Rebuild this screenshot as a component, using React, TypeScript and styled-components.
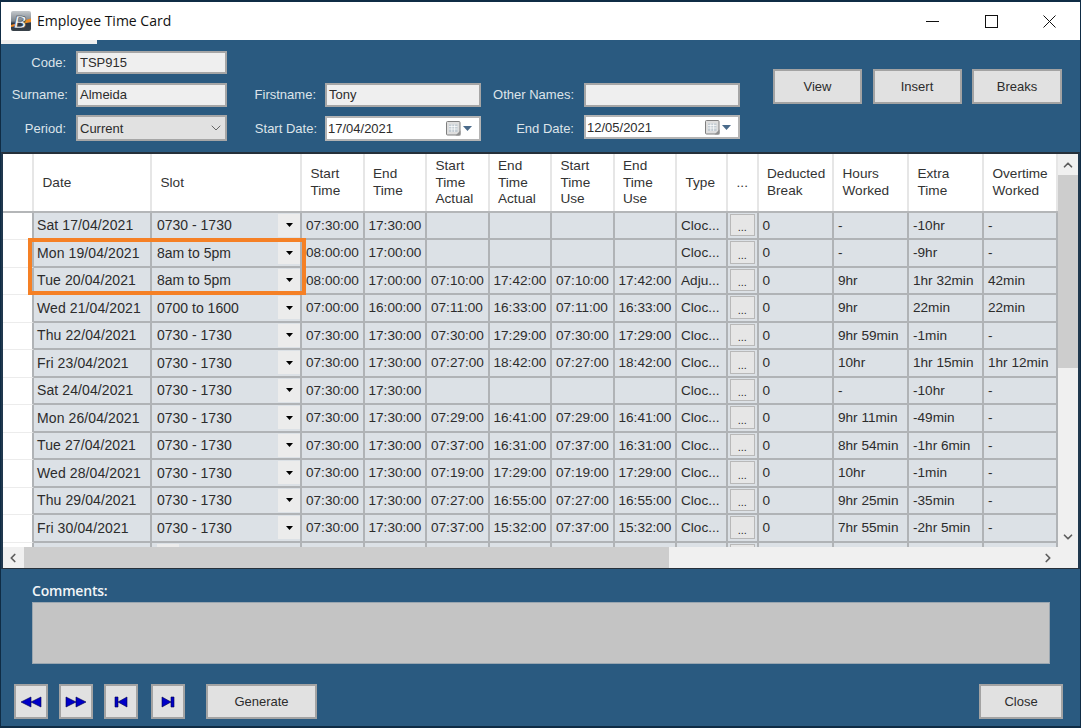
import styled, { createGlobalStyle } from "styled-components";
import { ChevronDown, ChevronLeft, ChevronRight, ChevronUp } from "lucide-react";

const GlobalStyle = createGlobalStyle`
  html, body {
    margin: 0;
    padding: 0;
    background: #1c3a55;
  }
  * {
    box-sizing: border-box;
  }
`;

const COLUMNS = "31px 118px 150px 62.5px 62.5px 62.5px 62.5px 62.5px 62.5px 51px 30.5px 75.5px 75px 75px 74px";

const Window = styled.div`
  position: relative;
  width: 1081px;
  height: 728px;
  padding: 2px 1px 3px 1px;
  display: flex;
  flex-direction: column;
  overflow: hidden;
  background: #0f2c45;
  font-family: "Liberation Sans", Arial, sans-serif;
  font-size: 14px;
  color: #2c2c2c;
`;

const TitleBar = styled.div`
  height: 38px;
  flex: none;
  display: flex;
  align-items: center;
  padding-left: 10px;
  background: #fff;
`;

const TitleText = styled.span`
  margin: -2px 0 0 6px;
  font-family: "Open Sans", sans-serif;
  font-size: 14px;
  color: #111;
`;

const WindowControls = styled.div`
  margin-left: auto;
  display: flex;
  padding-right: 1px;
`;

const WindowControl = styled.div`
  width: 58.5px;
  height: 38px;
  display: flex;
  align-items: center;
  justify-content: center;
`;

const Content = styled.div`
  flex: 1;
  display: flex;
  flex-direction: column;
  background: #2a5a80;
`;

const TabSliver = styled.div`
  width: 96px;
  height: 4px;
  margin-bottom: -4px;
  background: #efefef;
`;

const FormBar = styled.div`
  height: 112px;
  flex: none;
  display: flex;
  align-items: flex-start;
`;

const FormGrid = styled.div`
  display: grid;
  grid-template-columns: 75px 151px 98px 156px 103px 156px;
  grid-template-rows: 23px 24px 26px;
  row-gap: 8.5px;
  padding-top: 11px;
`;

const FieldLabel = styled.label<{ $right?: number }>`
  display: flex;
  align-items: center;
  justify-content: flex-end;
  padding-right: ${(p) => p.$right ?? 8}px;
  font-size: 13px;
  color: #dde4ea;
`;

const TextField = styled.div`
  display: flex;
  align-items: center;
  padding-left: 2px;
  font-size: 13px;
  background: #efefef;
  border: 2px solid #a6a6a6;
`;

const SelectField = styled(TextField)`
  justify-content: space-between;
  padding-right: 1px;
  background: #e1e1e1;
`;

const DateField = styled(TextField)<{ $compact?: boolean }>`
  justify-content: space-between;
  padding-left: 1px;
  padding-right: 7px;
  background: #fff;
  border-color: #b4b4b4;
  margin-bottom: ${(p) => (p.$compact ? "2px" : "0")};
  margin-top: ${(p) => (p.$compact ? "0" : "1px")};
`;

const DateIcons = styled.span`
  display: flex;
  align-items: center;
  gap: 2px;
`;

const ActionButtons = styled.div`
  display: flex;
  gap: 10.5px;
  margin: 29px 0 0 33px;
`;

const PushButton = styled.button<{ $width: number }>`
  width: ${(p) => p.$width}px;
  height: 35px;
  padding: 0;
  font-family: inherit;
  font-size: 13px;
  color: #2c2c2c;
  background: #e1e1e1;
  border: 2px solid #a3a3a3;
`;

const GridPanel = styled.div`
  position: relative;
  height: 417px;
  flex: none;
  display: grid;
  grid-template-columns: 1055px 20px;
  grid-template-rows: 393px 21px;
  background: #f0f0f0;
  border-top: 2px solid #26303a;
  border-left: 2px solid #20384e;
  border-right: 2px solid #20384e;
  border-bottom: 1px solid #26303a;
`;

const GridClip = styled.div`
  overflow: hidden;
  background: #fff;
  font-size: 13.6px;
`;

const HeaderRow = styled.div`
  display: grid;
  grid-template-columns: ${COLUMNS};
  height: 58.5px;
  background: #fff;
  border-bottom: 2px solid #b4b6b8;
`;

const HeaderCell = styled.div<{ $center?: boolean }>`
  display: flex;
  align-items: center;
  justify-content: ${(p) => (p.$center ? "center" : "flex-start")};
  padding-top: 1px;
  padding-left: ${(p) => (p.$center ? "0" : "8.5px")};
  line-height: 16.5px;
  white-space: pre-line;
  color: #333;
  border-right: 2px solid #e6e6e6;
`;

const BodyRow = styled.div`
  display: grid;
  grid-template-columns: ${COLUMNS};
  height: 27.5px;
`;

const RowHeader = styled.div`
  background: #fff;
  border-right: 2px solid #b0b3b6;
  border-bottom: 1px solid #ececec;
`;

const Cell = styled.div`
  display: flex;
  align-items: center;
  justify-content: space-between;
  padding-left: 4px;
  white-space: nowrap;
  overflow: hidden;
  background: #dce1e6;
  border-right: 2px solid #b0b3b6;
  border-bottom: 2px solid #b0b3b6;
`;

const DateCell = styled(Cell)`
  padding-left: 3px;
  font-size: 14px;
  letter-spacing: 0.1px;
`;

const ComboCell = styled(Cell)`
  padding-left: 5px;
  padding-right: 0;
  font-size: 14px;
`;

const ComboButton = styled.span`
  width: 22px;
  height: 23px;
  display: flex;
  align-items: center;
  justify-content: center;
  background: #ececec;
`;

const ButtonCell = styled(Cell)`
  padding: 1px 2px 2px 2px;
`;

const EllipsisButton = styled.span`
  width: 100%;
  height: 100%;
  display: flex;
  align-items: flex-end;
  justify-content: center;
  padding-bottom: 2px;
  font-size: 11px;
  background: #e6e6e6;
  border: 1px solid #b8b8b8;
`;

const VerticalBar = styled.div`
  display: flex;
  flex-direction: column;
  background: #f0f0f0;
`;

const HorizontalBar = styled.div`
  display: flex;
  background: #f0f0f0;
`;

const ArrowBox = styled.div<{ $end?: boolean }>`
  width: 20px;
  height: 21px;
  flex: none;
  display: flex;
  align-items: center;
  justify-content: center;
  margin-top: ${(p) => (p.$end ? "auto" : "0")};
  margin-left: ${(p) => (p.$end ? "auto" : "0")};
  color: #5e5e5e;
`;

const VerticalThumb = styled.div`
  width: 100%;
  height: 193px;
  background: #cdcdcd;
`;

const HorizontalThumb = styled.div`
  width: 645px;
  height: 100%;
  margin-left: 1px;
  background: #cdcdcd;
`;

const Highlight = styled.div`
  position: absolute;
  left: 25px;
  top: 84px;
  width: 278px;
  height: 57px;
  border: 4px solid #f58025;
  pointer-events: none;
`;

const LowerPanel = styled.div`
  flex: 1;
  display: flex;
  flex-direction: column;
  padding: 13px 17px 7px 13px;
`;

const CommentsLabel = styled.div`
  margin-left: 18px;
  height: 20px;
  font-family: "Open Sans", sans-serif;
  font-size: 14px;
  font-weight: 600;
  letter-spacing: -0.2px;
  line-height: 17px;
  color: #f2f5f7;
`;

const CommentsBox = styled.div`
  width: 1018px;
  height: 62px;
  margin-left: 18px;
  background: #c4c4c4;
  border: 1px solid #9aa6b0;
`;

const Footer = styled.div`
  display: flex;
  align-items: center;
  justify-content: space-between;
  margin-top: 20px;
`;

const NavGroup = styled.div`
  display: flex;
  gap: 11px;
`;

const NavButton = styled(PushButton)`
  display: flex;
  align-items: center;
  justify-content: center;
  &:nth-child(4) {
    margin-left: 2px;
  }
`;

const GenerateButton = styled(PushButton)`
  margin-left: 10px;
`;

const Logo = () => (
  <svg width="20" height="20" viewBox="0 0 20 20">
    <defs>
      <linearGradient id="logoBg" x1="0" y1="0" x2="0" y2="1">
        <stop offset="0" stopColor="#c4c8cc" />
        <stop offset="0.5" stopColor="#7d868e" />
        <stop offset="0.62" stopColor="#2e3740" />
        <stop offset="1" stopColor="#39424a" />
      </linearGradient>
    </defs>
    <rect width="20" height="20" rx="2" fill="url(#logoBg)" />
    <path d="M13 9.500 L20 7.500 V11 L13 12.500 Z" fill="#ee8a22" />
    <path d="M0 14 L5 12.500 V15 L0 16 Z" fill="#ee8a22" />
    <text x="3" y="16.500" fontFamily="Liberation Sans" fontStyle="italic" fontWeight="700" fontSize="17" fill="#f4f6f8" stroke="#20303e" strokeWidth="0.5">B</text>
  </svg>
);

const CalendarIcon = () => (
  <svg width="15" height="15" viewBox="0 0 15 15">
    <rect x="0.5" y="0.5" width="13.500" height="13.500" rx="1" fill="#dedede" stroke="#7f7f7f" />
    <path d="M3 3.500h8.500v7.500H3z" fill="#c3ccd3" />
    <path d="M3 5.500h8.500M3 8h8.500M5.800 3.500v7.500M8.600 3.500v7.500" stroke="#fff" strokeWidth="0.7" />
    <path d="M9.500 14.500 L14.500 9.500 V14.500 Z" fill="#8f8f8f" />
  </svg>
);

const DownTriangle = ({ color = "#000", width = 7 }: { color?: string; width?: number }) => (
  <svg width={width} height={Math.ceil(width / 2)} viewBox="0 0 8 4" preserveAspectRatio="none">
    <path d="M0 0h8L4 4z" fill={color} />
  </svg>
);

const NavIcon = ({ d }: { d: string }) => (
  <svg width="22" height="14" viewBox="0 0 22 14">
    <path d={d} fill="#0000c8" stroke="#00004a" strokeWidth="0.6" />
  </svg>
);

const headers = [
  "Date", "Slot", "Start\nTime", "End\nTime", "Start\nTime\nActual", "End\nTime\nActual",
  "Start\nTime\nUse", "End\nTime\nUse", "Type", "...", "Deducted\nBreak", "Hours\nWorked",
  "Extra\nTime", "Overtime\nWorked",
];

type Row = [string, string, string, string, string, string, string, string, string, string, string, string];

const A = "0730 - 1730";
const rows: Row[] = [
  ["Sat 17/04/2021", A, "07:30:00", "17:30:00", "", "", "", "", "Cloc...", "-", "-10hr", "-"],
  ["Mon 19/04/2021", "8am to 5pm", "08:00:00", "17:00:00", "", "", "", "", "Cloc...", "-", "-9hr", "-"],
  ["Tue 20/04/2021", "8am to 5pm", "08:00:00", "17:00:00", "07:10:00", "17:42:00", "07:10:00", "17:42:00", "Adju...", "9hr", "1hr 32min", "42min"],
  ["Wed 21/04/2021", "0700 to 1600", "07:00:00", "16:00:00", "07:11:00", "16:33:00", "07:11:00", "16:33:00", "Cloc...", "9hr", "22min", "22min"],
  ["Thu 22/04/2021", A, "07:30:00", "17:30:00", "07:30:00", "17:29:00", "07:30:00", "17:29:00", "Cloc...", "9hr 59min", "-1min", "-"],
  ["Fri 23/04/2021", A, "07:30:00", "17:30:00", "07:27:00", "18:42:00", "07:27:00", "18:42:00", "Cloc...", "10hr", "1hr 15min", "1hr 12min"],
  ["Sat 24/04/2021", A, "07:30:00", "17:30:00", "", "", "", "", "Cloc...", "-", "-10hr", "-"],
  ["Mon 26/04/2021", A, "07:30:00", "17:30:00", "07:29:00", "16:41:00", "07:29:00", "16:41:00", "Cloc...", "9hr 11min", "-49min", "-"],
  ["Tue 27/04/2021", A, "07:30:00", "17:30:00", "07:37:00", "16:31:00", "07:37:00", "16:31:00", "Cloc...", "8hr 54min", "-1hr 6min", "-"],
  ["Wed 28/04/2021", A, "07:30:00", "17:30:00", "07:19:00", "17:29:00", "07:19:00", "17:29:00", "Cloc...", "10hr", "-1min", "-"],
  ["Thu 29/04/2021", A, "07:30:00", "17:30:00", "07:27:00", "16:55:00", "07:27:00", "16:55:00", "Cloc...", "9hr 25min", "-35min", "-"],
  ["Fri 30/04/2021", A, "07:30:00", "17:30:00", "07:37:00", "15:32:00", "07:37:00", "15:32:00", "Cloc...", "7hr 55min", "-2hr 5min", "-"],
  ["", "", "", "", "", "", "", "", "", "", "", ""],
];

const App = () => {
  return (
    <Window>
      <GlobalStyle />
      <TitleBar>
        <Logo />
        <TitleText>Employee Time Card</TitleText>
        <WindowControls>
          <WindowControl>
            <svg width="13" height="13" viewBox="0 0 13 13">
              <path d="M0 6.500h13" stroke="#111" />
            </svg>
          </WindowControl>
          <WindowControl>
            <svg width="13" height="13" viewBox="0 0 13 13">
              <rect x="0.500" y="0.500" width="12" height="12" fill="none" stroke="#111" />
            </svg>
          </WindowControl>
          <WindowControl>
            <svg width="13" height="13" viewBox="0 0 13 13">
              <path d="M0.500 0.500l12 12M12.500 0.500l-12 12" stroke="#111" />
            </svg>
          </WindowControl>
        </WindowControls>
      </TitleBar>

      <Content>
        <TabSliver />
        <FormBar>
          <FormGrid>
            <FieldLabel $right={10}>Code:</FieldLabel>
            <TextField>TSP915</TextField>
            <span />
            <span />
            <span />
            <span />

            <FieldLabel>Surname:</FieldLabel>
            <TextField>Almeida</TextField>
            <FieldLabel $right={9}>Firstname:</FieldLabel>
            <TextField>Tony</TextField>
            <FieldLabel $right={10}>Other Names:</FieldLabel>
            <TextField />

            <FieldLabel $right={10}>Period:</FieldLabel>
            <SelectField>
              Current
              <ChevronDown size={16} color="#666" strokeWidth={1.5} />
            </SelectField>
            <FieldLabel>Start Date:</FieldLabel>
            <DateField>
              17/04/2021
              <DateIcons>
                <CalendarIcon />
                <DownTriangle color="#4a6a8a" width={9} />
              </DateIcons>
            </DateField>
            <FieldLabel $right={10}>End Date:</FieldLabel>
            <DateField $compact>
              12/05/2021
              <DateIcons>
                <CalendarIcon />
                <DownTriangle color="#4a6a8a" width={9} />
              </DateIcons>
            </DateField>
          </FormGrid>
          <ActionButtons>
            <PushButton $width={89}>View</PushButton>
            <PushButton $width={89}>Insert</PushButton>
            <PushButton $width={90}>Breaks</PushButton>
          </ActionButtons>
        </FormBar>

        <GridPanel>
          <GridClip>
            <HeaderRow>
              <HeaderCell />
              {headers.map((h, i) => (
                <HeaderCell key={i} $center={h === "..."}>
                  {h}
                </HeaderCell>
              ))}
            </HeaderRow>
            {rows.map((r, i) => (
              <BodyRow key={i}>
                <RowHeader />
                <DateCell>{r[0]}</DateCell>
                <ComboCell>
                  {r[1]}
                  <ComboButton>
                    <DownTriangle />
                  </ComboButton>
                </ComboCell>
                <Cell>{r[2]}</Cell>
                <Cell>{r[3]}</Cell>
                <Cell>{r[4]}</Cell>
                <Cell>{r[5]}</Cell>
                <Cell>{r[6]}</Cell>
                <Cell>{r[7]}</Cell>
                <Cell>{r[8]}</Cell>
                <ButtonCell>
                  <EllipsisButton>{r[0] ? "..." : ""}</EllipsisButton>
                </ButtonCell>
                <Cell>{r[0] ? "0" : ""}</Cell>
                <Cell>{r[9]}</Cell>
                <Cell>{r[10]}</Cell>
                <Cell>{r[11]}</Cell>
              </BodyRow>
            ))}
          </GridClip>
          <VerticalBar>
            <ArrowBox>
              <ChevronUp size={14} strokeWidth={3} />
            </ArrowBox>
            <VerticalThumb />
            <ArrowBox $end>
              <ChevronDown size={14} strokeWidth={3} />
            </ArrowBox>
          </VerticalBar>
          <HorizontalBar>
            <ArrowBox>
              <ChevronLeft size={14} strokeWidth={3} />
            </ArrowBox>
            <HorizontalThumb />
            <ArrowBox $end>
              <ChevronRight size={14} strokeWidth={3} />
            </ArrowBox>
          </HorizontalBar>
          <Highlight />
        </GridPanel>

        <LowerPanel>
          <CommentsLabel>Comments:</CommentsLabel>
          <CommentsBox />
          <Footer>
            <NavGroup>
              <NavButton $width={34}>
                <NavIcon d="M1 7l10-5v10zM11 7l10-5v10z" />
              </NavButton>
              <NavButton $width={34}>
                <NavIcon d="M1 2l10 5-10 5zM11 2l10 5-10 5z" />
              </NavButton>
              <NavButton $width={34}>
                <NavIcon d="M5 2h3v10H5zM8 7l9-5v10z" />
              </NavButton>
              <NavButton $width={34}>
                <NavIcon d="M5 2l9 5-9 5zM14 2h3v10h-3z" />
              </NavButton>
              <GenerateButton $width={111}>Generate</GenerateButton>
            </NavGroup>
            <PushButton $width={84}>Close</PushButton>
          </Footer>
        </LowerPanel>
      </Content>
    </Window>
  );
};

export default App;
